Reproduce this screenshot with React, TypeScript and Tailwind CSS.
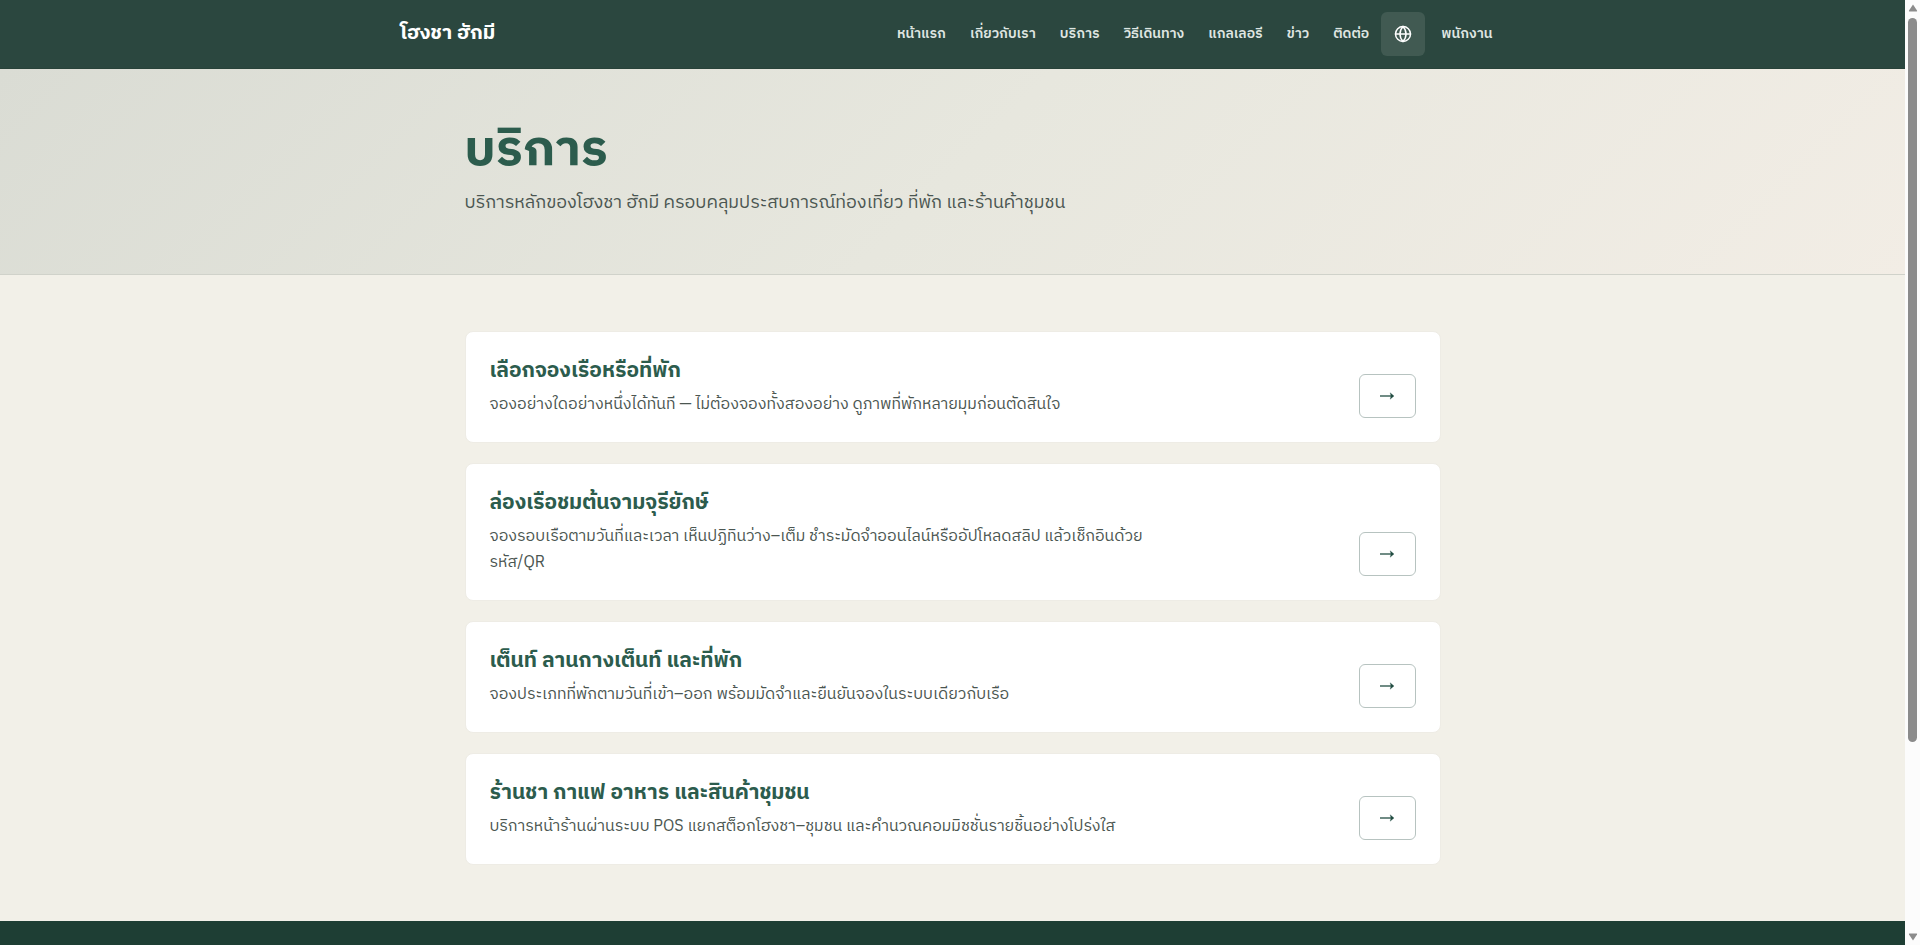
import { Globe } from "lucide-react";

const navLinks = ["หน้าแรก", "เกี่ยวกับเรา", "บริการ", "วิธีเดินทาง", "แกลเลอรี", "ข่าว", "ติดต่อ"];

const services = [
  {
    title: "เลือกจองเรือหรือที่พัก",
    desc: "จองอย่างใดอย่างหนึ่งได้ทันที — ไม่ต้องจองทั้งสองอย่าง ดูภาพที่พักหลายมุมก่อนตัดสินใจ",
  },
  {
    title: "ล่องเรือชมต้นจามจุรียักษ์",
    desc: "จองรอบเรือตามวันที่และเวลา เห็นปฏิทินว่าง–เต็ม ชำระมัดจำออนไลน์หรืออัปโหลดสลิป แล้วเช็กอินด้วยรหัส/QR",
  },
  {
    title: "เต็นท์ ลานกางเต็นท์ และที่พัก",
    desc: "จองประเภทที่พักตามวันที่เข้า–ออก พร้อมมัดจำและยืนยันจองในระบบเดียวกับเรือ",
  },
  {
    title: "ร้านชา กาแฟ อาหาร และสินค้าชุมชน",
    desc: "บริการหน้าร้านผ่านระบบ POS แยกสต็อกโฮงชา–ชุมชน และคำนวณคอมมิชชั่นรายชิ้นอย่างโปร่งใส",
  },
];

function Header() {
  return (
    <header className="border-b border-[#284239] bg-[#2b473f] text-white">
      <div className="mx-auto flex max-w-6xl items-center justify-between px-6 py-3">
        <a href="#" className="text-xl leading-[30px] font-bold">
          โฮงชา ฮักมี
        </a>
        <nav className="flex items-center">
          {navLinks.map((label) => (
            <a key={label} href="#" className="px-3 text-sm font-semibold text-[#dfe5e1]">
              {label}
            </a>
          ))}
          <button
            type="button"
            aria-label="ภาษา"
            className="mr-1 flex h-11 w-11 items-center justify-center rounded-md bg-[#415a52]"
          >
            <Globe className="h-[18px] w-[18px]" />
          </button>
          <a href="#" className="px-3 text-sm font-semibold text-[#dfe5e1]">
            พนักงาน
          </a>
        </nav>
      </div>
    </header>
  );
}

function ServiceCard({ title, desc }: { title: string; desc: string }) {
  return (
    <article className="flex items-end justify-between gap-6 rounded-lg border border-[#eeece5] bg-white p-6">
      <div className="max-w-2xl">
        <h2 className="mb-1.5 text-[21px] leading-[30px] font-bold text-[#2c5c4d]">{title}</h2>
        <p className="text-base leading-[26px] text-[#4b5651]">{desc}</p>
      </div>
      <a
        href="#"
        aria-label={title}
        className="flex h-11 w-[57px] shrink-0 items-center justify-center rounded-md border border-[#b7c3c0] text-[#234e43]"
      >
        <svg viewBox="0 0 14 8" className="h-2 w-3.5" fill="none" stroke="currentColor">
          <path d="M0 4h13" strokeWidth="1.3" />
          <path d="M10.2 0.800 14 4l-3.800 3.200L11 4Z" fill="currentColor" strokeWidth="0.3" />
        </svg>
      </a>
    </article>
  );
}

function Scrollbar() {
  return (
    <div aria-hidden="true" className="sticky top-0 flex h-screen w-[15px] shrink-0 flex-col items-center bg-[#fcfcfc] py-1">
      <svg viewBox="0 0 10 8" className="h-2 w-2.5" fill="#8b8b8b">
        <path d="M5 0.5 9 6.5Q9.500 7.500 8.500 7.500H1.500Q0.500 7.500 1 6.500Z" />
      </svg>
      <div className="mt-1.5 h-[724px] w-[9px] rounded-full bg-[#8b8b8b]" />
      <svg viewBox="0 0 10 8" className="mt-auto h-2 w-2.5" fill="#8b8b8b">
        <path d="M5 7.500 9 1.500Q9.500 0.500 8.500 0.500H1.500Q0.500 0.500 1 1.500Z" />
      </svg>
    </div>
  );
}

export default function App() {
  return (
    <div className="flex min-h-screen bg-[#f2f0e8] font-['IBM_Plex_Sans_Thai','Noto_Sans',sans-serif]">
      <div className="flex min-w-0 flex-1 flex-col">
        <Header />
        <section className="border-b border-[#d0d2ca] bg-linear-135 from-[#dadcd4] via-[#e7e7de] to-[#f2ede5]">
          <div className="mx-auto max-w-5xl px-6 py-14">
            <h1 className="text-[50px] leading-[52px] font-bold text-[#2c5c4d]">บริการ</h1>
            <p className="mt-3 text-lg leading-[29px] text-[#4b5651]">
              บริการหลักของโฮงชา ฮักมี ครอบคลุมประสบการณ์ท่องเที่ยว ที่พัก และร้านค้าชุมชน
            </p>
          </div>
        </section>
        <main className="mx-auto flex w-full max-w-5xl flex-col gap-5 px-6 py-14">
          {services.map((service) => (
            <ServiceCard key={service.title} {...service} />
          ))}
        </main>
        <footer className="flex-1 bg-[#1e3e34]" />
      </div>
      <Scrollbar />
    </div>
  );
}
